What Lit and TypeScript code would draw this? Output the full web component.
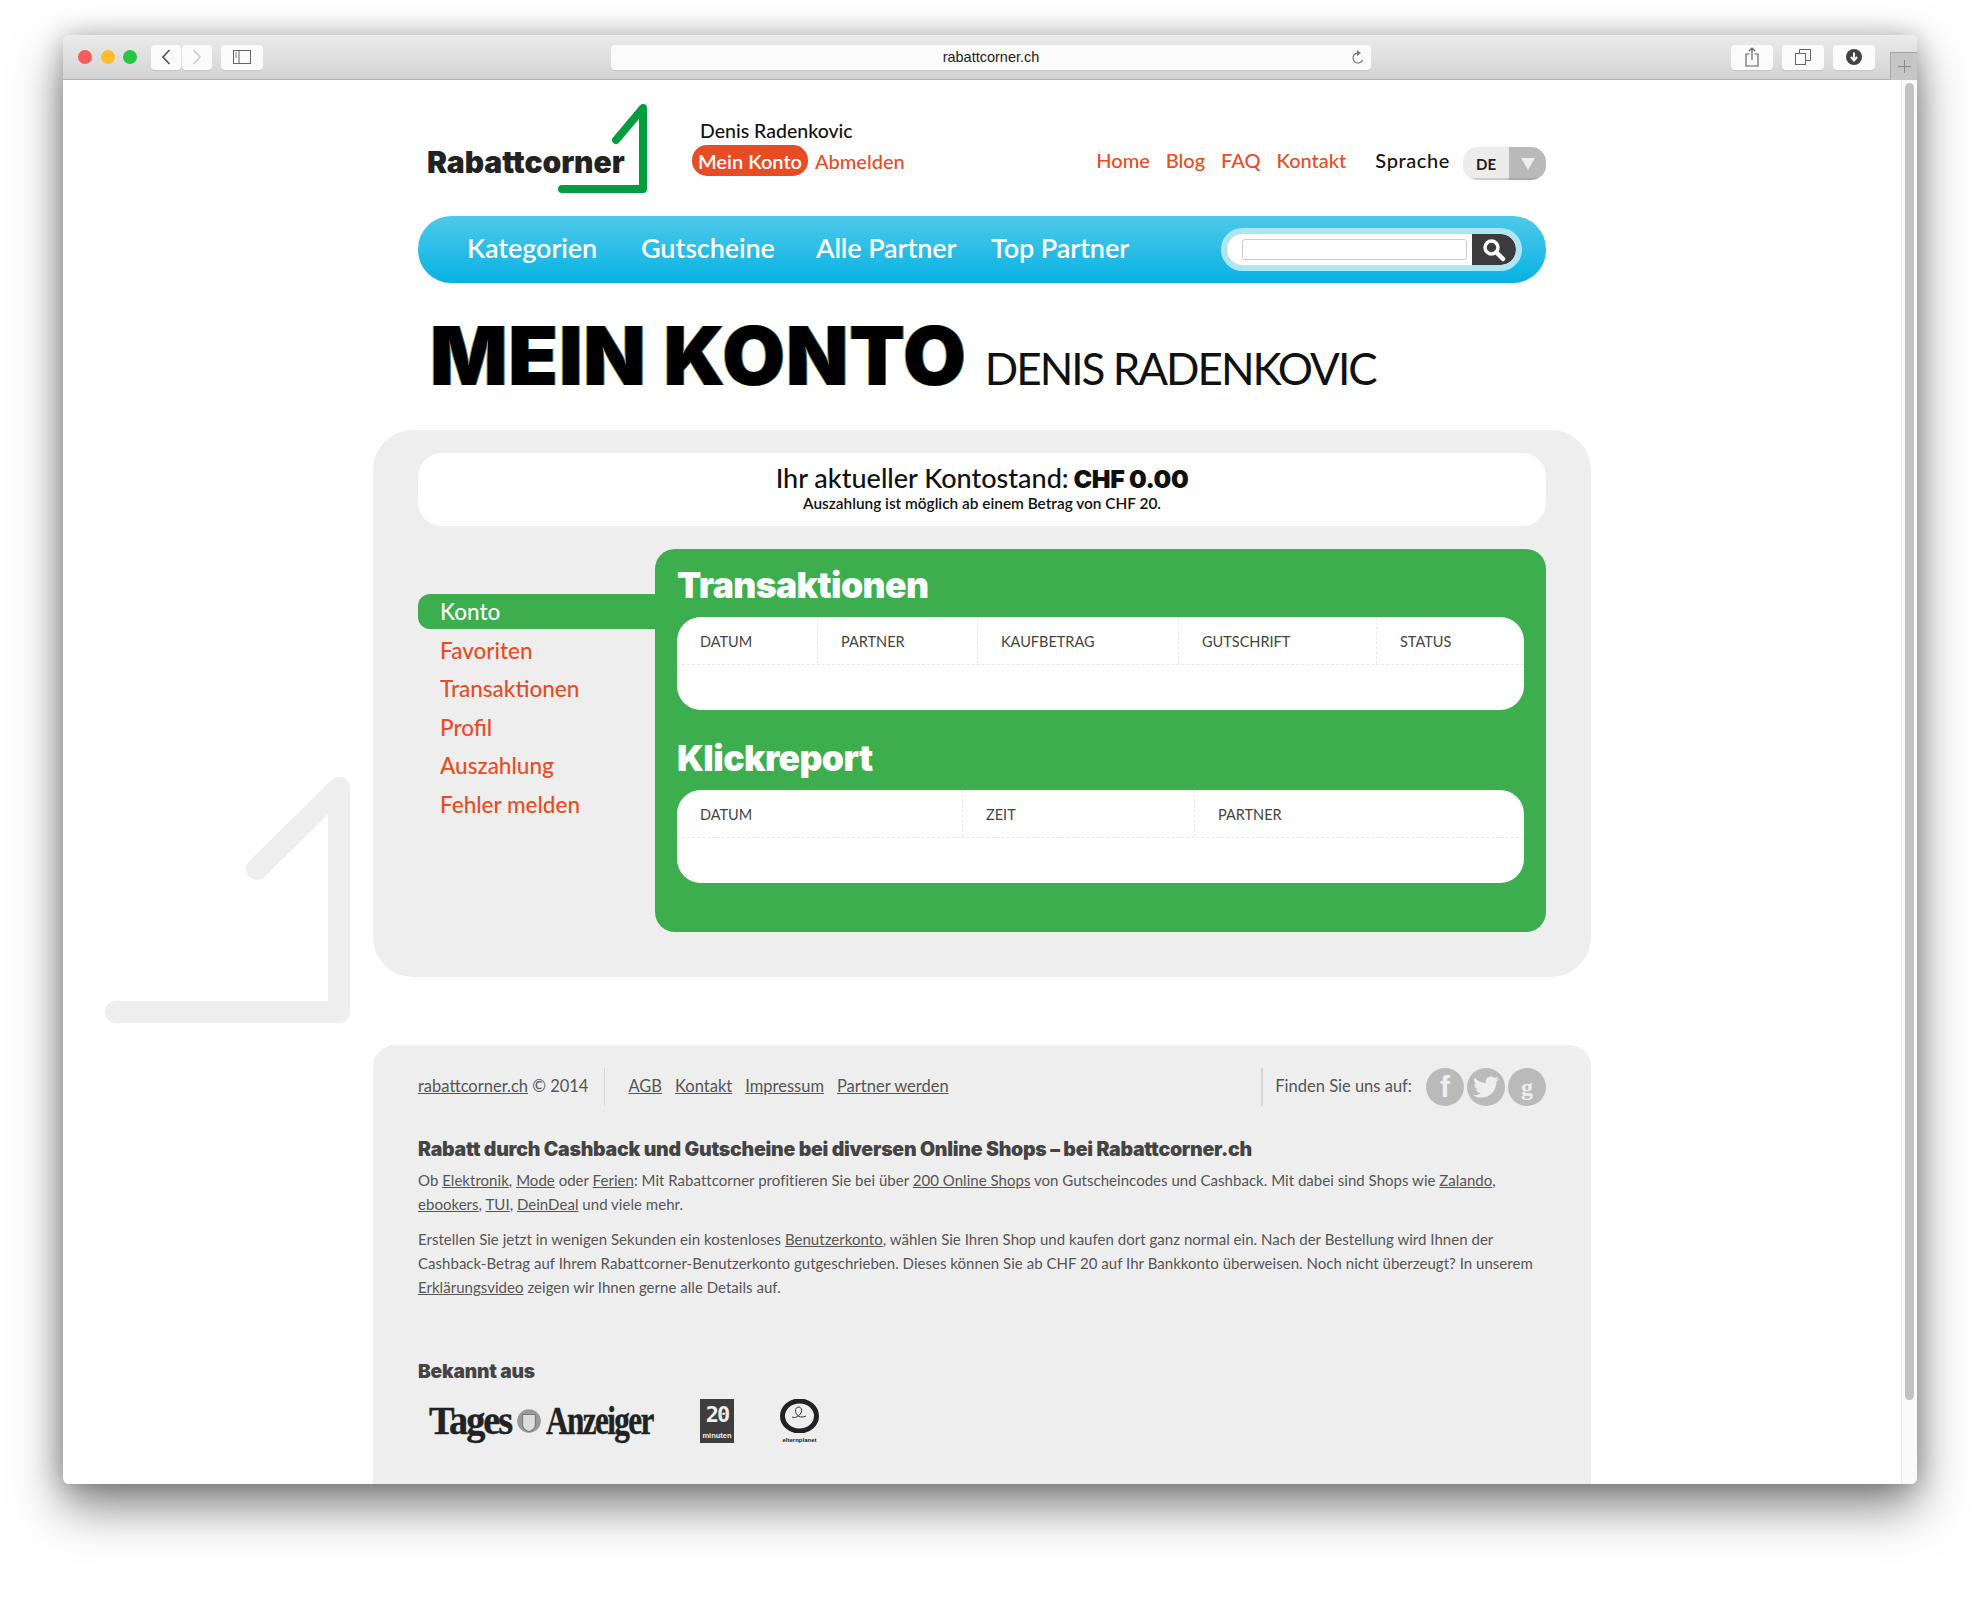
import { LitElement, html, css } from "lit";
import { customElement } from "lit/decorators.js";

@customElement("app-root")
export class AppRoot extends LitElement {
  static styles = css`
    :host { display: block; height: 1616px; padding: 35px 63px 0; box-sizing: border-box; background: #fff; font-family: "Lato", "Liberation Sans", sans-serif; color: #111; overflow: hidden; }
    a { color: inherit; }
    .window { height: 1449px; border-radius: 6px; overflow: hidden; background: #fff; box-shadow: 0 22px 50px rgba(0,0,0,.5), 0 0 24px rgba(0,0,0,.22); display: flex; flex-direction: column; }
    .titlebar { position: relative; height: 45px; flex: none; box-sizing: border-box; border-bottom: 1px solid #b4b4b4; background: linear-gradient(#ebebeb, #d3d3d3); display: flex; align-items: center; padding: 0 42px 0 15px; }
    .lights { display: flex; gap: 8.5px; width: 73px; }
    .light { width: 14px; height: 14px; border-radius: 50%; }
    .red { background: #fc5b57; } .yellow { background: #fdbc2e; } .green { background: #26c83f; }
    .tbtn { height: 25px; border-radius: 4px; background: #fbfbfb; display: flex; align-items: center; justify-content: center; box-shadow: 0 1px 0 #c4c4c4; }
    .tbtn svg { display: block; }
    .nav-pair { display: flex; gap: 1px; }
    .w30 { width: 30px; } .w42 { width: 42px; margin-left: 9px; } .w41 { width: 42px; }
    .url { position: relative; margin-left: 348px; width: 760px; height: 25px; background: #fbfbfb; border-radius: 4px; box-shadow: 0 1px 0 #c4c4c4; display: flex; align-items: center; justify-content: center; font-size: 14.5px; color: #222; font-family: "Liberation Sans", sans-serif; }
    .reload { position: absolute; right: 6px; top: 5px; }
    .right-btns { margin-left: auto; display: flex; gap: 9px; }
    .plus { position: absolute; right: 0; top: 17px; width: 27px; height: 28px; box-sizing: border-box; background: #c6c6c6; border-left: 1px solid #a6a6a6; border-top: 1px solid #a6a6a6; display: flex; align-items: center; justify-content: center; }
    .content { flex: 1; display: flex; min-height: 0; }
    .page { position: relative; flex: 1; min-width: 0; display: flex; flex-direction: column; align-items: center; overflow: hidden; }
    .scroll { width: 16px; flex: none; background: #fafafa; border-left: 1px solid #e8e8e8; box-sizing: border-box; padding: 3px 3px 0 3px; }
    .thumb { height: 1317px; border-radius: 5px; background: #c2c2c2; }
    .watermark { position: absolute; left: 42px; top: 695px; }
    .top { position: relative; width: 1128px; margin-top: 23px; height: 90px; display: flex; }
    .logo { position: relative; width: 274px; flex: none; box-sizing: border-box; padding: 41px 0 0 9px; font: 900 30px/36px "Inter", sans-serif; letter-spacing: -.05px; color: #222; }
    .logo svg { position: absolute; left: 140px; top: 0; }
    .user { padding-top: 16px; }
    .uname { font-size: 19.5px; line-height: 24px; padding-left: 8px; font-weight: 500; color: #111; }
    .ulinks { display: flex; align-items: center; margin-top: 2px; font-size: 20px; font-weight: 500; color: #e84c24; }
    .pill { width: 116px; height: 31px; border-radius: 15px; background: #e84c24; color: #fff; display: flex; align-items: center; justify-content: center; margin-right: 7px; font-weight: 600; }
    .links { margin-left: auto; padding-top: 39px; display: flex; align-items: flex-start; font-size: 20px; font-weight: 500; color: #e84c24; line-height: 36px; height: 36px; }
    .links span { margin-right: 16px; }
    .links .sprache { color: #111; margin: 0 13px 0 13px; letter-spacing: .6px; }
    .select { display: flex; width: 83px; height: 33px; margin-top: 5px; border-radius: 15px; overflow: hidden; box-shadow: inset 0 -2px 0 #c8c8c8; }
    .de { width: 46px; background: #ececec; font-size: 15px; font-weight: 700; display: flex; align-items: center; justify-content: center; color: #222; box-shadow: inset 0 -2px 0 #ccc; }
    .arrow { flex: 1; background: #b9b9b9; display: flex; align-items: center; justify-content: center; box-shadow: inset 0 -2px 0 #a8a8a8; }
    .nav { width: 1128px; height: 67px; margin-top: 23px; flex: none; border-radius: 33px; background: linear-gradient(#4fc9ea, #07b2e3); display: flex; align-items: center; color: #fff; font-size: 27px; font-weight: 600; box-sizing: border-box; padding: 0 24px 0 49px; position: relative; }
    .nav span { padding-bottom: 5px; letter-spacing: -.1px; }
    .navk { width: 174px; } .navg { width: 175px; } .nava { width: 175px; }
    .search { margin-left: auto; width: 301px; height: 43px; box-sizing: border-box; border: 6px solid #aee5f5; border-radius: 22px; background: #fff; display: flex; align-items: center; padding-left: 15px; overflow: hidden; }
    .input { width: 226px; height: 21px; box-sizing: border-box; border: 1px solid #ccc; border-radius: 3px; background: #fff; }
    .sbtn { margin-left: 5px; width: 44px; height: 31px; border-radius: 0 15px 15px 0; background: #3b3b3b; display: flex; align-items: center; justify-content: center; }
    .title { width: 1128px; height: 147px; flex: none; box-sizing: border-box; padding: 0 0 0 12px; display: flex; align-items: baseline; }
    .title h1 { margin: 28px 0 0; font: 900 81px/90px "Inter", sans-serif; letter-spacing: .9px; color: #000; text-shadow: -1px 0 0 #c8a020, 1px 0 0 #2080c0; }
    .title .name { margin-left: 18px; font-size: 44px; font-weight: 400; letter-spacing: -2px; color: #111; }
    .panel { position: relative; width: 1218px; flex: none; box-sizing: border-box; background: #eee; border-radius: 40px; padding: 23px 45px 45px; }
    .balance { height: 73px; background: #fff; border-radius: 24px; text-align: center; box-sizing: border-box; padding-top: 10px; margin-bottom: 23px; }
    .b1 { font-size: 27px; line-height: 29px; font-weight: 500; }
    .b1 b { font: 900 25px "Inter", sans-serif; letter-spacing: -.4px; margin-left: -2px; }
    .b2 { font-size: 15.4px; line-height: 19px; font-weight: 600; margin-top: 0; }
    .row { display: flex; }
    .side { width: 237px; flex: none; padding-top: 45px; font-size: 22.5px; font-weight: 500; color: #e84c24; }
    .side div { height: 38.4px; line-height: 37px; padding-left: 22px; }
    .side .active { height: 35px; line-height: 36px; margin-bottom: 3px; background: #3dae4e; color: #fff; border-radius: 12px 0 0 12px; }
    .green-box { flex: 1; height: 383px; background: #3dae4e; border-radius: 20px; box-sizing: border-box; padding: 16px 22px 0; }
    .green-box h2 { margin: 0; height: 52px; font: 900 35.5px/42px "Inter", sans-serif; color: #fff; letter-spacing: -.6px; }
    .table { height: 93px; background: #fff; border-radius: 24px; margin-bottom: 28px; }
    .thead { display: grid; height: 47px; border-bottom: 1px dashed #e8e8e8; font-size: 14.5px; color: #444; align-items: stretch; }
    .thead div { padding: 15px 0 0 23px; line-height: 20px; border-left: 1px dashed #eaeaea; }
    .thead div:first-child { border-left: 0; }
    .t1 { grid-template-columns: 140px 160px 201px 198px 148px; }
    .t2 { grid-template-columns: 285px 232px 330px; }
    .footer { width: 1218px; flex: none; margin-top: 68px; background: #eee; border-radius: 22px 22px 0 0; box-sizing: border-box; padding: 23px 45px 0; flex-grow: 1; color: #555; font-size: 15px; }
    .frow { display: flex; align-items: center; height: 38px; font-size: 16.5px; }
    .frow > span, .flinks, .fright > span { margin-top: -2px; }
    .fsep { width: 1px; height: 38px; background: #d6d6d6; margin: 0 23px 0 16px; }
    .flinks { display: flex; gap: 13px; }
    .fright { margin-left: auto; display: flex; align-items: center; }
    .fright .fsep { margin: 0 12px 0 0; width: 2px; }
    .soc { display: flex; gap: 3px; margin-left: 14px; }
    .circle { width: 38px; height: 38px; border-radius: 50%; background: #bababa; color: #eee; display: flex; align-items: center; justify-content: center; font: 700 26px "Liberation Serif", serif; }
    .f { font: 700 30px "Liberation Sans", sans-serif; } .g { font-size: 24px; }
    .fh { margin: 31px 0 0; font: 900 19.5px/24px "Inter", sans-serif; letter-spacing: -.25px; color: #444; }
    .fp { margin: 7px 0 0; line-height: 24px; letter-spacing: .03px; white-space: nowrap; }
    .fp + .fp { margin-top: 11px; }
    .fk { margin: 60px 0 0; font: 900 19.2px/24px "Inter", sans-serif; letter-spacing: -.2px; color: #444; }
    .logos { display: flex; align-items: flex-start; margin-top: 16px; }
    .ta { width: 224px; margin-left: 11px; height: 44px; display: flex; align-items: center; font: 700 39px/44px "Liberation Serif", serif; color: #222; letter-spacing: -2px; white-space: nowrap; -webkit-text-stroke: .4px #222; }
    .ta span { display: block; transform-origin: left center; }
    .ta .t { width: 85px; margin-right: -2px; transform: scaleX(.98); }
    .ta .a { width: 130px; margin-right: -24px; transform: scaleX(.8); }
    .ta svg { flex: none; margin: 0 2px; }
    .m20 { margin-left: 47px; width: 34px; height: 44px; background: #3e3e3e; color: #eee; text-align: center; overflow: hidden; }
    .m20 div { font: 700 22px/32px "DejaVu Sans Mono", monospace; letter-spacing: -2px; height: 32px; }
    .m20 small { display: block; font: 700 7.5px/9px "Liberation Sans", sans-serif; letter-spacing: 0; }
    .ep { margin-left: 45px; width: 41px; text-align: center; font: 700 6px/8px "Liberation Sans", sans-serif; color: #222; }
    .ep svg { display: block; margin-bottom: 3px; }
  `;

  render() {
    return html`
      <div class="window">
        <div class="titlebar">
          <div class="lights"><div class="light red"></div><div class="light yellow"></div><div class="light green"></div></div>
          <div class="nav-pair">
            <div class="tbtn w30"><svg width="12" height="18" viewBox="0 0 12 18"><path d="M9.500 2 3 9l6.500 7" fill="none" stroke="#555" stroke-width="1.700"/></svg></div>
            <div class="tbtn w30"><svg width="12" height="18" viewBox="0 0 12 18"><path d="M2.500 2 9 9l-6.500 7" fill="none" stroke="#ccc" stroke-width="1.700"/></svg></div>
          </div>
          <div class="tbtn w42"><svg width="18" height="14" viewBox="0 0 18 14"><rect x=".5" y=".5" width="17" height="13" fill="none" stroke="#666"/><path d="M6 0v14" stroke="#666"/><path d="M2 3h2M2 5h2M2 7h2" stroke="#888"/></svg></div>
          <div class="url">rabattcorner.ch
            <svg class="reload" width="14" height="16" viewBox="0 0 14 16"><path d="M7 3a5 5 0 1 0 5 5" fill="none" stroke="#777" stroke-width="1.200" transform="rotate(20 7 8)"/><path d="M6 0l4 3-4 3z" fill="#777"/></svg>
          </div>
          <div class="right-btns">
            <div class="tbtn w41"><svg width="14" height="20" viewBox="0 0 14 20"><path d="M4.500 7H1v12h12V7H9.500M7 13V1M4 4l3-3 3 3" fill="none" stroke="#666" stroke-width="1.200"/></svg></div>
            <div class="tbtn w41"><svg width="16" height="16" viewBox="0 0 16 16"><rect x=".5" y="4.500" width="10" height="11" fill="#fbfbfb" stroke="#666"/><path d="M4.500 4V.5h11v11H11" fill="none" stroke="#666"/></svg></div>
            <div class="tbtn w41"><svg width="16" height="16" viewBox="0 0 16 16"><circle cx="8" cy="8" r="8" fill="#444"/><path d="M8 3.500v7M5 8l3 3.500L11 8" fill="none" stroke="#fff" stroke-width="2"/></svg></div>
          </div>
          <div class="plus"><svg width="13" height="13" viewBox="0 0 13 13"><path d="M6.500 0v13M0 6.500h13" stroke="#888"/></svg></div>
        </div>
        <div class="content">
          <div class="page">
            <svg class="watermark" width="245" height="250" viewBox="0 0 245 250"><path d="M11 237H234V13L152 94" fill="none" stroke="#eee" stroke-width="22" stroke-linecap="round" stroke-linejoin="round"/></svg>
            <div class="top">
              <div class="logo">Rabattcorner
                <svg width="92" height="92" viewBox="0 0 92 92"><path d="M4 86H85V5L58 37" fill="none" stroke="#009e3d" stroke-width="8" stroke-linecap="round" stroke-linejoin="round"/></svg>
              </div>
              <div class="user">
                <div class="uname">Denis Radenkovic</div>
                <div class="ulinks"><span class="pill">Mein Konto</span><span>Abmelden</span></div>
              </div>
              <div class="links"><span>Home</span><span>Blog</span><span>FAQ</span><span>Kontakt</span><span class="sprache">Sprache</span>
                <div class="select"><div class="de">DE</div><div class="arrow"><svg width="16" height="14" viewBox="0 0 16 14"><path d="M1 1h14L8 13z" fill="#eee"/></svg></div></div>
              </div>
            </div>
            <div class="nav">
              <span class="navk">Kategorien</span><span class="navg">Gutscheine</span><span class="nava">Alle Partner</span><span>Top Partner</span>
              <div class="search"><div class="input"></div><div class="sbtn"><svg width="26" height="26" viewBox="0 0 26 26"><circle cx="10.500" cy="10.500" r="6.500" fill="#3b3b3b" stroke="#fff" stroke-width="3.500"/><path d="M15.500 15.500 22 22" stroke="#fff" stroke-width="4.500" stroke-linecap="round"/></svg></div></div>
            </div>
            <div class="title"><h1>MEIN KONTO</h1><span class="name">DENIS RADENKOVIC</span></div>
            <div class="panel">
              <div class="balance">
                <div class="b1">Ihr aktueller Kontostand: <b>CHF 0.00</b></div>
                <div class="b2">Auszahlung ist möglich ab einem Betrag von CHF 20.</div>
              </div>
              <div class="row">
                <div class="side">
                  <div class="active">Konto</div>
                  <div>Favoriten</div><div>Transaktionen</div><div>Profil</div><div>Auszahlung</div><div>Fehler melden</div>
                </div>
                <div class="green-box">
                  <h2>Transaktionen</h2>
                  <div class="table"><div class="thead t1"><div>DATUM</div><div>PARTNER</div><div>KAUFBETRAG</div><div>GUTSCHRIFT</div><div>STATUS</div></div></div>
                  <h2>Klickreport</h2>
                  <div class="table"><div class="thead t2"><div>DATUM</div><div>ZEIT</div><div>PARTNER</div></div></div>
                </div>
              </div>
            </div>
            <div class="footer">
              <div class="frow">
                <span><a href="#">rabattcorner.ch</a> © 2014</span>
                <div class="fsep"></div>
                <div class="flinks"><a href="#">AGB</a><a href="#">Kontakt</a><a href="#">Impressum</a><a href="#">Partner werden</a></div>
                <div class="fright"><div class="fsep"></div><span>Finden Sie uns auf:</span>
                  <div class="soc">
                    <div class="circle f">f</div>
                    <div class="circle"><svg width="26" height="26" viewBox="0 0 24 24"><path fill="#eee" d="M23.954 4.569c-.885.389-1.830.654-2.825.775 1.014-.611 1.794-1.574 2.163-2.723-.951.555-2.005.959-3.127 1.184-.896-.959-2.173-1.559-3.591-1.559-2.717 0-4.920 2.203-4.920 4.917 0 .39.045.765.127 1.124C7.691 8.094 4.066 6.130 1.640 3.161c-.427.722-.666 1.561-.666 2.475 0 1.710.87 3.213 2.188 4.096-.807-.026-1.566-.248-2.228-.616v.061c0 2.385 1.693 4.374 3.946 4.827-.413.111-.849.171-1.296.171-.314 0-.615-.03-.916-.086.631 1.953 2.445 3.377 4.604 3.417-1.680 1.319-3.809 2.105-6.102 2.105-.39 0-.779-.023-1.170-.067 2.189 1.394 4.768 2.209 7.557 2.209 9.054 0 13.999-7.496 13.999-13.986 0-.209 0-.42-.015-.63.961-.689 1.800-1.560 2.460-2.548l-.047-.02z"/></svg></div>
                    <div class="circle g">g</div>
                  </div>
                </div>
              </div>
              <h3 class="fh">Rabatt durch Cashback und Gutscheine bei diversen Online Shops – bei Rabattcorner.ch</h3>
              <p class="fp">Ob <a href="#">Elektronik</a>, <a href="#">Mode</a> oder <a href="#">Ferien</a>: Mit Rabattcorner profitieren Sie bei über <a href="#">200 Online Shops</a> von Gutscheincodes und Cashback. Mit dabei sind Shops wie <a href="#">Zalando</a>,<br><a href="#">ebookers</a>, <a href="#">TUI</a>, <a href="#">DeinDeal</a> und viele mehr.</p>
              <p class="fp">Erstellen Sie jetzt in wenigen Sekunden ein kostenloses <a href="#">Benutzerkonto</a>, wählen Sie Ihren Shop und kaufen dort ganz normal ein. Nach der Bestellung wird Ihnen der<br>Cashback-Betrag auf Ihrem Rabattcorner-Benutzerkonto gutgeschrieben. Dieses können Sie ab CHF 20 auf Ihr Bankkonto überweisen. Noch nicht überzeugt? In unserem<br><a href="#">Erklärungsvideo</a> zeigen wir Ihnen gerne alle Details auf.</p>
              <h3 class="fk">Bekannt aus</h3>
              <div class="logos">
                <div class="ta"><span class="t">Tages</span><svg width="30" height="30" viewBox="0 0 28 28"><circle cx="14" cy="14" r="11" fill="#999"/><path d="M8 8h12v9q0 5-6 7-6-2-6-7z" fill="#ddd" stroke="#777"/></svg><span class="a">Anzeiger</span></div>
                <div class="m20"><div>20</div><small>minuten</small></div>
                <div class="ep"><svg width="41" height="34" viewBox="0 0 41 34"><ellipse cx="20.500" cy="17" rx="17" ry="15" fill="none" stroke="#222" stroke-width="5"/><path d="M13 18c6 3 14-8 7-10-7 0-3 14 7 9" fill="none" stroke="#333"/></svg>elternplanet</div>
              </div>
            </div>
          </div>
          <div class="scroll"><div class="thumb"></div></div>
        </div>
      </div>
    `;
  }
}
